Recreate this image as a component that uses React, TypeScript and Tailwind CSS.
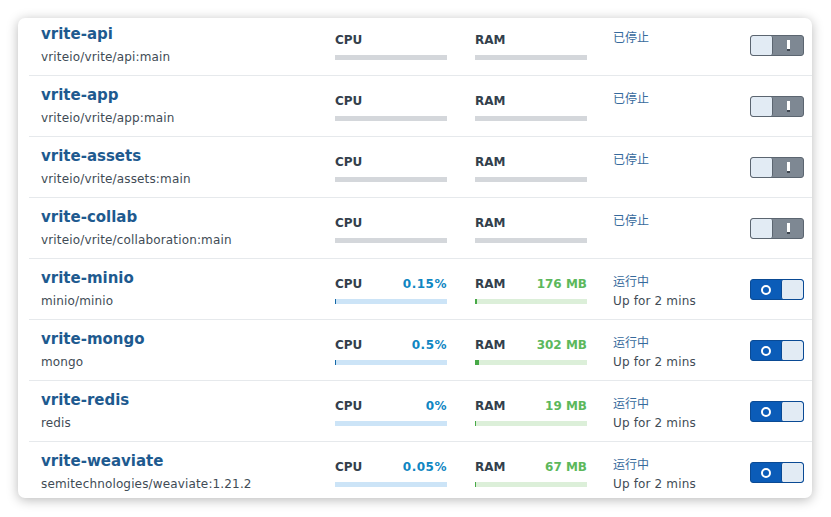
import React from 'react';

type Container = {
  name: string;
  image: string;
  running: boolean;
  cpu?: string;
  cpuFill?: number;
  ram?: string;
  ramFill?: number;
};

const containers: Container[] = [
  { name: 'vrite-api', image: 'vriteio/vrite/api:main', running: false },
  { name: 'vrite-app', image: 'vriteio/vrite/app:main', running: false },
  { name: 'vrite-assets', image: 'vriteio/vrite/assets:main', running: false },
  { name: 'vrite-collab', image: 'vriteio/vrite/collaboration:main', running: false },
  { name: 'vrite-minio', image: 'minio/minio', running: true, cpu: '0.15%', cpuFill: 1, ram: '176 MB', ramFill: 2 },
  { name: 'vrite-mongo', image: 'mongo', running: true, cpu: '0.5%', cpuFill: 1, ram: '302 MB', ramFill: 4 },
  { name: 'vrite-redis', image: 'redis', running: true, cpu: '0%', cpuFill: 0, ram: '19 MB', ramFill: 1 },
  { name: 'vrite-weaviate', image: 'semitechnologies/weaviate:1.21.2', running: true, cpu: '0.05%', cpuFill: 0, ram: '67 MB', ramFill: 1 },
];

const Toggle = ({ on }: { on: boolean }) => {
  if (on) {
    return (
      <div className="flex h-[21px] w-[54px] overflow-hidden rounded-[3px] border border-[#0a4a94] bg-[#0b5cb8]">
        <div className="flex flex-1 items-center justify-center">
          <div className="h-[10px] w-[10px] rounded-full border-2 border-white" />
        </div>
        <div className="w-[22px] rounded-[2px] border-l border-[#0a4a94] bg-[#e2ebf4]" />
      </div>
    );
  }
  return (
    <div className="flex h-[21px] w-[54px] overflow-hidden rounded-[3px] border border-[#5b6570] bg-[#7e8893]">
      <div className="w-[22px] rounded-[2px] border-r border-[#5b6570] bg-[#e2ebf4]" />
      <div className="flex flex-1 items-center justify-center">
        <div className="flex h-[11px] w-[3px] flex-col">
          <div className="flex-1 bg-white" />
          <div className="h-[2px] bg-[#3e4650]" />
        </div>
      </div>
    </div>
  );
};

const Meter = ({
  label,
  value,
  fill,
  tone,
}: {
  label: string;
  value?: string;
  fill?: number;
  tone: 'cpu' | 'ram' | 'off';
}) => {
  const track =
    tone === 'cpu' ? 'bg-[#cce4f7]' : tone === 'ram' ? 'bg-[#dcefd9]' : 'bg-[#d4d7db]';
  const bar = tone === 'cpu' ? 'bg-[#1569a8]' : 'bg-[#47a947]';
  const valueColor = tone === 'cpu' ? 'text-[#0f86c2] tracking-[0.5px]' : 'text-[#5cb85c]';
  return (
    <div className="w-[112px] pt-[17px]">
      <div className="flex justify-between text-[12px] leading-4 font-bold">
        <span className="text-[#333f4c]">{label}</span>
        {value && <span className={valueColor}>{value}</span>}
      </div>
      <div className={`mt-[7px] flex h-[5px] ${track}`}>
        {fill ? <div className={bar} style={{ width: fill }} /> : null}
      </div>
    </div>
  );
};

const Row = ({ c }: { c: Container }) => (
  <div className="flex h-[61px] flex-none border-b border-[#e6e9ec] pl-3 pr-2">
    <div className="w-[294px] flex-none pt-[9px]">
      <div className="text-[15px] leading-5 font-bold text-[#1e5a8f]">{c.name}</div>
      <div className="mt-1 text-[12px] leading-[18px] tracking-[0.15px] text-[#414b55]">{c.image}</div>
    </div>
    <Meter label="CPU" value={c.cpu} fill={c.cpuFill} tone={c.running ? 'cpu' : 'off'} />
    <div className="ml-[28px]">
      <Meter label="RAM" value={c.ram} fill={c.ramFill} tone={c.running ? 'ram' : 'off'} />
    </div>
    <div className="ml-[26px] flex-1 pt-[15px]">
      <div className="text-[12px] leading-4 text-[#376a9c]">{c.running ? '运行中' : '已停止'}</div>
      {c.running && (
        <div className="mt-[2px] text-[12px] leading-[18px] tracking-[0.15px] text-[#414b55]">
          Up for 2 mins
        </div>
      )}
    </div>
    <div className="pt-[20px]">
      <Toggle on={c.running} />
    </div>
  </div>
);

export default function App() {
  return (
    <div
      className="h-[517px] w-[831px] bg-white p-[18px] pr-[19px]"
      style={{ fontFamily: '"DejaVu Sans", "Noto Sans CJK SC", sans-serif' }}
    >
      <div className="h-[480px] overflow-hidden rounded-[7px] bg-white pl-[11px] shadow-[0_2px_12px_rgba(0,0,0,0.28)]">
        <div className="-mt-[3px] flex flex-col">
          {containers.map((c) => (
            <Row key={c.name} c={c} />
          ))}
        </div>
      </div>
    </div>
  );
}
